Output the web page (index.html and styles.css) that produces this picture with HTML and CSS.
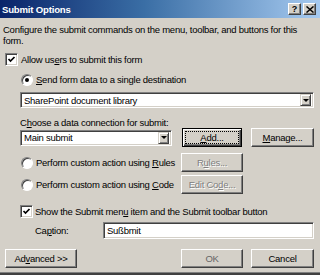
FILE: index.html
```html
<!DOCTYPE html>
<html>
<head>
<meta charset="utf-8">
<link rel="stylesheet" href="styles.css">
</head>
<body>
<div class="dialog">
  <div class="titlebar">
    <span class="title">Submit Options</span>
    <span class="tbtn help">?</span>
    <span class="tbtn close"><svg width="8" height="7" viewBox="0 0 8 7"><path d="M0.5 0.5 L7.5 6.5 M7.5 0.5 L0.5 6.5" stroke="#000" stroke-width="1.5" fill="none"/></svg></span>
  </div>
  <div class="content">
    <p class="desc">Configure the submit commands on the menu, toolbar, and buttons for this<br>form.</p>
    <div class="row check allow"><span class="cb"><svg width="9" height="9" viewBox="0 0 9 9"><polyline points="1.5,4 3.5,6 7.5,2" stroke="#000" stroke-width="1.7" fill="none"/></svg></span><span>Allow us<u>e</u>rs to submit this form</span></div>
    <div class="indent">
      <div class="row radio send"><span class="rb on"></span><span><u>S</u>end form data to a single destination</span></div>
      <div class="field dest"><span class="val">SharePoint document library</span><span class="arrow"><span class="tri"></span></span></div>
      <div class="label"><span>C<u>h</u>oose a data connection for submit:</span></div>
      <div class="conn-row">
        <div class="field conn"><span class="val">Main submit</span><span class="arrow"><span class="tri"></span></span></div>
        <span class="btn default add"><span class="focus"><u>A</u>dd...</span></span>
        <span class="btn manage"><u>M</u>anage...</span>
      </div>
      <div class="row action rules-row">
        <div class="radio-part"><span class="rb"></span><span>Perform custom action using <u>R</u>ules</span></div>
        <span class="btn disabled">R<u>u</u>les...</span>
      </div>
      <div class="row action code-row">
        <div class="radio-part"><span class="rb"></span><span>Perform custom action using <u>C</u>ode</span></div>
        <span class="btn disabled">Edit Co<u>d</u>e...</span>
      </div>
      <div class="row check show"><span class="cb"><svg width="9" height="9" viewBox="0 0 9 9"><polyline points="1.5,4 3.5,6 7.5,2" stroke="#000" stroke-width="1.7" fill="none"/></svg></span><span>Show the Submit men<u>u</u> item and the Submit toolbar button</span></div>
      <div class="caption-row"><span class="cap-label">Ca<u>p</u>tion:</span><div class="field text"><span class="val">Sußbmit</span></div></div>
    </div>
    <div class="footer">
      <span class="btn adv">Ad<u>v</u>anced &gt;&gt;</span>
      <span class="btn ok">OK</span>
      <span class="btn cancel">Cancel</span>
    </div>
  </div>
</div>
</body>
</html>
```
FILE: styles.css
```css
* { box-sizing: border-box; }
body {
  margin: 0;
  background: #fff;
  font-family: "Liberation Sans", Arial, sans-serif;
  font-size: 9.5px;
  letter-spacing: -0.25px;
  color: #000;
  white-space: nowrap;
}
u { text-decoration: underline; text-underline-offset: 1px; }
.dialog {
  width: 320px;
  height: 275px;
  background: #d4d0c8;
  border-bottom: 2px solid #404040;
  box-shadow: inset 0 -1px #808080;
  overflow: hidden;
}
.titlebar {
  height: 18px;
  display: flex;
  align-items: center;
  gap: 2px;
  padding: 0 4px 0 2px;
  background: linear-gradient(to right, #0a246a 0%, #3a6ea5 45%, #a6caf0 100%);
}
.title {
  flex: 1;
  color: #fff;
  font-weight: bold;
  font-size: 9.6px;
  letter-spacing: -0.2px;
}
.tbtn {
  width: 13px;
  height: 12px;
  background: #d4d0c8;
  border: 1px solid;
  border-color: #fff #404040 #404040 #fff;
  box-shadow: inset -1px -1px #808080;
  display: flex;
  align-items: center;
  justify-content: center;
  font-weight: bold;
  font-size: 9px;
  line-height: 1;
  letter-spacing: 0;
}
.content { padding: 0 6px 0 3px; }
.desc { margin: 6px 0 0; line-height: 11px; }
.row { display: flex; align-items: center; }
.check { height: 13px; gap: 3px; }
.allow { margin: 7px 0 0 2px; }
.indent { margin-left: 17px; }
.radio { height: 13px; gap: 3px; }
.send { margin: 7px 0 0 1px; }
.cb {
  width: 13px;
  height: 13px;
  background: #fff;
  border: 1px solid;
  border-color: #808080 #fff #fff #808080;
  box-shadow: inset 1px 1px #404040, inset -1px -1px #d4d0c8;
  display: flex;
  align-items: center;
  justify-content: center;
  flex: none;
}
.rb {
  width: 12px;
  height: 12px;
  border-radius: 50%;
  background: #fff;
  border: 1px solid;
  border-color: #808080 #fff #fff #808080;
  box-shadow: inset 1px 1px #404040;
  flex: none;
  display: flex;
  align-items: center;
  justify-content: center;
}
.rb.on::after {
  content: "";
  width: 4px;
  height: 4px;
  border-radius: 50%;
  background: #000;
}
.field {
  height: 16px;
  background: #fff;
  border: 1px solid;
  border-color: #808080 #fff #fff #808080;
  box-shadow: inset 1px 1px #404040, inset -1px -1px #d4d0c8;
  display: flex;
  align-items: center;
  padding: 2px;
}
.field .val { flex: 1; padding-left: 1px; }
.arrow {
  width: 11px;
  height: 12px;
  background: #d4d0c8;
  border: 1px solid;
  border-color: #d4d0c8 #404040 #404040 #d4d0c8;
  box-shadow: inset 1px 1px #fff, inset -1px -1px #808080;
  display: flex;
  align-items: center;
  justify-content: center;
}
.tri {
  width: 0;
  height: 0;
  border-left: 3px solid transparent;
  border-right: 3px solid transparent;
  border-top: 3px solid #000;
}
.dest { margin-top: 6px; width: 294px; }
.label { margin-top: 9px; line-height: 11px; }
.conn-row { display: flex; align-items: center; height: 19px; }
.conn { width: 152px; }
.btn {
  height: 19px;
  background: #d4d0c8;
  border: 1px solid;
  border-color: #fff #404040 #404040 #fff;
  box-shadow: inset -1px -1px #808080;
  display: flex;
  align-items: center;
  justify-content: center;
  flex: none;
}
.btn.default {
  border: 1px solid #000;
  box-shadow: inset 1px 1px #fff, inset -1px -1px #404040, inset -2px -2px #808080;
  padding: 2px;
}
.focus {
  flex: 1;
  align-self: stretch;
  border: 1px dotted #000;
  display: flex;
  align-items: center;
  justify-content: center;
}
.add { width: 60px; margin-left: 10px; }
.manage { width: 63px; margin-left: 9px; }
.action { height: 19px; }
.radio-part { width: 161px; display: flex; align-items: center; gap: 3px; padding-left: 1px; }
.rules-row { margin-top: 6px; }
.code-row { margin-top: 3px; }
.action .btn { width: 62px; }
.btn.disabled { color: #808080; text-shadow: 1px 1px #fff; }
.show { margin-top: 11px; gap: 2px; }
.caption-row { display: flex; align-items: center; margin-top: 4px; height: 17px; }
.cap-label { width: 83px; padding-left: 15px; }
.field.text { width: 211px; height: 17px; }
.footer { display: flex; align-items: center; gap: 8px; margin: 10px 0 0 2px; }
.adv { width: 72px; }
.ok { width: 62px; margin-left: auto; color: #666; }
.cancel { width: 63px; }
```
